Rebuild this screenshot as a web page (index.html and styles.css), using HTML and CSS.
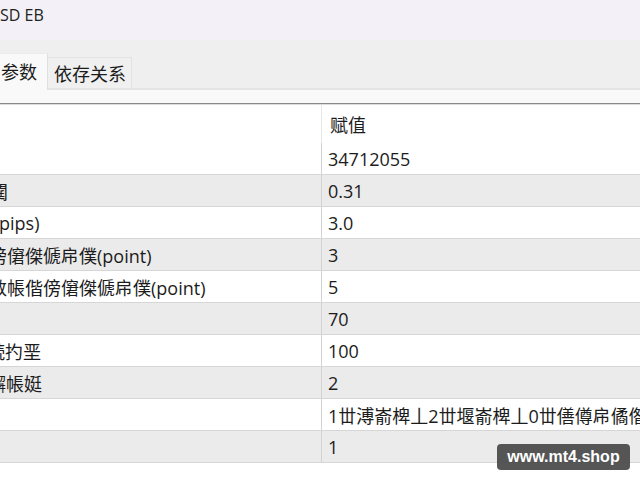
FILE: index.html
```html
<!DOCTYPE html>
<html lang="zh">
<head>
<meta charset="utf-8">
<title>SD EB</title>
<link rel="stylesheet" href="styles.css">
</head>
<body>
<div class="window">
  <div class="titlebar"><span class="title">SD EB</span></div>
  <div class="tabstrip">
    <div class="tab active">参数</div>
    <div class="tab">依存关系</div>
  </div>
  <div class="panel-top"></div>
  <div class="table">
    <div class="row header"><div class="name"></div><div class="value head-value">赋值</div></div>
    <div class="row first"><div class="name"></div><div class="value">34712055</div></div>
    <div class="row alt"><div class="name"><span class="label cut-10">閲閮</span></div><div class="value">0.31</div></div>
    <div class="row"><div class="name"><span class="label cut-1">pips)</span></div><div class="value">3.0</div></div>
    <div class="row alt"><div class="name"><span class="label cut-11">傍僒傑傂帍僕(point)</span></div><div class="value">3</div></div>
    <div class="row"><div class="name"><span class="label cut-11">数帳偕傍僒傑傂帍僕(point)</span></div><div class="value">5</div></div>
    <div class="row alt"><div class="name"></div><div class="value">70</div></div>
    <div class="row"><div class="name"><span class="label cut-13">続扚垩</span></div><div class="value">100</div></div>
    <div class="row alt"><div class="name"><span class="label cut-12">嶰帳娗</span></div><div class="value">2</div></div>
    <div class="row"><div class="name"></div><div class="value">1丗溥嵛椑丄2丗堰嵛椑丄0丗僐僔帍僪偺</div></div>
    <div class="row alt"><div class="name"></div><div class="value">1</div></div>
  </div>
</div>
<div class="watermark">www.mt4.shop</div>
</body>
</html>
```
FILE: styles.css
```css
html, body {
  margin: 0;
  padding: 0;
  background: #ffffff;
}
body {
  width: 640px;
  height: 480px;
  overflow: hidden;
  position: relative;
  font-family: "Open Sans", "Noto Sans CJK SC", sans-serif;
  color: #1c1c1c;
}
.window {
  display: flex;
  flex-direction: column;
}
.titlebar {
  height: 40px;
  background: #f3f1f7;
  display: flex;
  align-items: flex-start;
}
.title {
  font-size: 16px;
  line-height: 30px;
  color: #222222;
  padding-left: 0;
}
.tabstrip {
  height: 48px;
  background: #efefef;
  border-bottom: 2px solid #e4e4e4;
  display: flex;
  align-items: flex-end;
}
.tab {
  font-family: "Noto Sans CJK SC", sans-serif;
  font-size: 18px;
  height: 31px;
  line-height: 30px;
  padding: 0 5px 0 6px;
  background: #f0f0f0;
  border-top: 1px solid #e2e2e2;
  border-right: 1px solid #e2e2e2;
  box-sizing: border-box;
  color: #1c1c1c;
}
.tab.active {
  height: 37px;
  line-height: 34px;
  width: 48px;
  padding: 0 0 0 1px;
  margin-bottom: -2px;
  background: #f9f9f9;
  border-top: 1px solid #ececec;
  border-right: 1px solid #e0e0e0;
  z-index: 1;
}
.panel-top {
  height: 13px;
  background: #f9f9f9;
  border-bottom: 1px solid #8a8a8a;
}
.table {
  display: flex;
  flex-direction: column;
  border-top: 1px solid #dcdcdc;
}
.row {
  display: flex;
  height: 31px;
  border-bottom: 1px solid #d6d6d6;
  background: #ffffff;
  font-size: 18px;
}
.row.header {
  height: 38px;
  border-bottom: none;
}
.row.first {
  height: 31px;
}
.row.alt {
  background: #ebebeb;
}
.name {
  width: 321px;
  flex: none;
  border-right: 1px solid #d2d2d2;
  overflow: hidden;
  white-space: nowrap;
  display: flex;
  align-items: center;
}
.header .name {
  border-right-color: #e6e6e6;
}
.value {
  flex: 1;
  padding-left: 6px;
  overflow: hidden;
  white-space: nowrap;
  display: flex;
  align-items: center;
  font-family: "Open Sans", "Noto Sans CJK SC", sans-serif;
}
.head-value {
  padding-left: 8px;
  font-family: "Noto Sans CJK SC", sans-serif;
}
.label {
  font-family: "Open Sans", "Noto Sans CJK SC", sans-serif;
  display: block;
  white-space: nowrap;
}
.cut-1 { margin-left: -1px; }
.cut-10 { margin-left: -28px; }
.cut-11 { margin-left: -11px; }
.cut-12 { margin-left: -12px; }
.cut-13 { margin-left: -13px; }
.watermark {
  position: absolute;
  left: 497px;
  top: 444px;
  width: 133px;
  height: 26px;
  border-radius: 4px;
  background: rgba(72, 72, 72, 0.92);
  color: #ffffff;
  font-family: "Liberation Sans", Arial, sans-serif;
  font-weight: bold;
  font-size: 16px;
  line-height: 26px;
  text-align: center;
}
```
